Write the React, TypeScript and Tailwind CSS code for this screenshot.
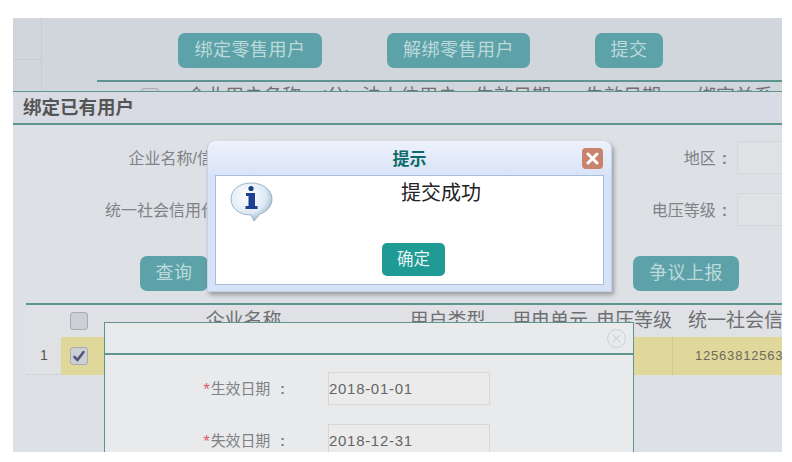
const font = { fontFamily: '"Liberation Sans", "Noto Sans CJK SC", sans-serif' }

function PageButton({ label, className }: { label: string; className: string }) {
  return (
    <button className={`h-[35px] shrink-0 rounded-[7px] bg-[#5da2a8] text-[18px] text-[#bcdadb] tracking-[0.5px] ${className}`}>
      {label}
    </button>
  )
}

function Checkbox({ checked }: { checked?: boolean }) {
  return (
    <span className="flex h-[18px] w-[18px] items-center justify-center rounded-[3px] border border-[#a9abb2] bg-[#cdcfd5]">
      {checked && (
        <svg width="14" height="14" viewBox="0 0 14 14">
          <path d="M2.5 8 L5.5 11 L11.5 3" fill="none" stroke="#55557a" strokeWidth="2.6" strokeLinecap="round" strokeLinejoin="round" />
        </svg>
      )}
    </span>
  )
}

function InfoIcon() {
  return (
    <svg width="44" height="42" viewBox="0 0 44 42">
      <defs>
        <radialGradient id="bubble" cx="0.4" cy="0.35" r="0.75">
          <stop offset="0" stopColor="#ffffff" />
          <stop offset="0.6" stopColor="#dfeaf5" />
          <stop offset="1" stopColor="#86a3bf" />
        </radialGradient>
      </defs>
      <path
        d="M21 1 C32 1 42 7 42 17 C42 25 36 30 30 32 L24 39 L21 33 C10 33 1 27 1 17 C1 7 10 1 21 1 Z"
        fill="url(#bubble)"
        stroke="#8ba4bd"
        strokeWidth="0.8"
      />
      <circle cx="21" cy="6.5" r="2.6" fill="#1a3f8a" />
      <path d="M16 11 H25 V24 H27.5 V27 H15.5 V24 H18.5 V14 H16 Z" fill="#1c3f94" />
    </svg>
  )
}

function Field({ label, value }: { label: string; value: string }) {
  return (
    <div className="flex h-[33px] items-center">
      <span className="flex w-[183px] items-center justify-end pt-[2px] text-[15px] text-[#808285]">
        <span className="mr-[1px] text-[17px] leading-none text-[#d9606e]">*</span>
        <span className="tracking-[-0.2px]">{label}</span>
        <span className="ml-[10px] mr-[3px] font-bold">:</span>
      </span>
      <span className="ml-[40px] flex h-[33px] w-[162px] items-center border border-[#d6d6d6] bg-[#ebebeb] pt-[2px] text-[15px] tracking-[0.7px] text-[#666]">
        {value}
      </span>
    </div>
  )
}

export default function App() {
  return (
    <div className="h-[462px] w-[792px] overflow-hidden bg-white pl-[13px] pt-[18px]" style={font}>
      <div className="relative h-[434px] w-[769px] overflow-hidden bg-[#d1d5dc]">
        {/* back page */}
        <div className="flex h-[73px]">
          <div className="w-[29px] shrink-0 border-r border-[#c7cbd2]">
            <div className="h-[42px] border-b border-[#c7cbd2]" />
          </div>
          <div className="flex-1">
            <div className="flex h-[62px] items-start pt-[15px]">
              <PageButton label="绑定零售用户" className="ml-[136px] w-[144px]" />
              <PageButton label="解绑零售用户" className="ml-[65px] w-[143px]" />
              <PageButton label="提交" className="ml-[65px] w-[68px]" />
            </div>
            <div className="ml-[55px] grid h-[32px] grid-cols-[90px_133px_42px_113px_110px_112px_1fr] items-center whitespace-nowrap border-t-2 border-[#5f9590] text-[19px] text-[#6d6f72]">
              <span className="pl-[44px]"><Checkbox /></span>
              <span>企业用户名称</span>
              <span>(分)</span>
              <span>法人位用户</span>
              <span>生效日期</span>
              <span>失效日期</span>
              <span>绑定关系</span>
            </div>
          </div>
        </div>

        {/* bind user window */}
        <div className="absolute inset-x-0 bottom-0 top-[73px] border-t border-[#5f9590] bg-[#dde0e5]">
          <div className="flex h-[33px] items-center border-b-2 border-[#5f9590] bg-[#d8dbe3] pl-[10px] text-[18.5px] font-bold text-[#555]">
            绑定已有用户
          </div>
          <div className="mt-[16px] flex h-[33px] items-center text-[16px] text-[#808285]">
            <span className="w-[236px] shrink-0 pr-[4px] pt-[3px] text-right">企业名称/信用：</span>
            <span className="w-[479px] shrink-0 pt-[3px] text-right">
              地区<span className="ml-[6px] mr-[1px] font-bold">:</span>
            </span>
            <span className="ml-[9px] h-[33px] w-[80px] shrink-0 border border-[#d4d6da] bg-[#dfe1e5]" />
          </div>
          <div className="mt-[19px] flex h-[33px] items-center text-[16px] text-[#808285]">
            <span className="w-[236px] shrink-0 pt-[3px] text-right">统一社会信用代码：</span>
            <span className="w-[479px] shrink-0 pt-[3px] text-right">
              电压等级<span className="ml-[6px] mr-[1px] font-bold">:</span>
            </span>
            <span className="ml-[9px] h-[33px] w-[80px] shrink-0 border border-[#d4d6da] bg-[#dfe1e5]" />
          </div>
          <div className="mt-[30px] flex">
            <PageButton label="查询" className="ml-[127px] w-[68px]" />
            <PageButton label="争议上报" className="ml-[425px] w-[106px]" />
          </div>
          <div className="ml-[13px] mt-[12px] border-t-2 border-[#5f9590]">
            <div className="grid h-[32px] grid-cols-[35px_36px_293px_115px_90px_78px_1fr] items-center overflow-hidden whitespace-nowrap bg-[#dfe1e5] text-[19px] text-[#6d6f72]">
              <span />
              <span className="pl-[9px]"><Checkbox /></span>
              <span className="text-center">企业名称</span>
              <span className="text-center">用户类型</span>
              <span className="text-center">用电单元</span>
              <span className="text-center">电压等级</span>
              <span className="pl-[15px]">统一社会信用代码</span>
            </div>
            <div className="grid h-[38px] grid-cols-[35px_36px_293px_115px_90px_78px_1fr] items-center bg-[#e0d79a] text-[13px] text-[#6b6b5a]">
              <span className="flex h-full items-center border-b border-dotted border-[#c4c6cb] bg-[#dfe1e5] pl-[14px] text-[14px] text-[#555]">1</span>
              <span className="pl-[9px]"><Checkbox checked /></span>
              <span />
              <span />
              <span />
              <span className="h-full border-r border-[#d3ca90]" />
              <span className="whitespace-nowrap pl-[22px] tracking-[0.8px]">12563812563</span>
            </div>
          </div>
        </div>

        {/* date window */}
        <div className="absolute left-[91px] top-[304px] h-[160px] w-[530px] border border-[#5f9590] bg-[#e9eaeb]">
          <div className="flex h-[32px] items-center justify-end border-b-2 border-[#5f9590] pr-[7px]">
            <span className="flex h-[19px] w-[19px] items-center justify-center rounded-full border border-[#cfcfd2]">
              <svg width="9" height="9" viewBox="0 0 9 9">
                <path d="M1 1 L8 8 M8 1 L1 8" stroke="#c4c4c8" strokeWidth="1" />
              </svg>
            </span>
          </div>
          <div className="mt-[17px] flex flex-col gap-[19px]">
            <Field label="生效日期" value="2018-01-01" />
            <Field label="失效日期" value="2018-12-31" />
          </div>
        </div>

        {/* message dialog */}
        <div className="absolute left-[194px] top-[123px] flex h-[151px] w-[405px] flex-col rounded-t-[7px] border border-[#c3d0e6] bg-[#d5e2f7] px-[7px] pb-[6px] shadow-[2px_3px_4px_rgba(90,90,90,0.5)]">
          <div className="relative -mx-[7px] -mt-px flex h-[34px] shrink-0 items-center justify-center rounded-t-[7px] bg-gradient-to-b from-[#edf2fb] to-[#d9e4f7] pt-[3px] text-[17px] font-bold text-[#0d6a6a]">
            提示
            <span className="absolute right-[8px] top-[7px] flex h-[21px] w-[21px] items-center justify-center rounded-[4px] bg-[#c9826b]">
              <svg width="13" height="13" viewBox="0 0 13 13">
                <path d="M2 2 L11 11 M11 2 L2 11" stroke="#fff" strokeWidth="3" strokeLinecap="round" />
              </svg>
            </span>
          </div>
          <div className="flex flex-1 flex-col border border-[#a9bddb] bg-white">
            <div className="flex h-[67px]">
              <div className="ml-[14px] mt-[6px]"><InfoIcon /></div>
              <span className="ml-[127px] mt-[5px] text-[20px] leading-[24px] text-[#222]">提交成功</span>
            </div>
            <button className="ml-[166px] h-[33px] w-[63px] rounded-[5px] bg-[#1f9a95] text-[16.5px] text-[#e8f4f3]">确定</button>
          </div>
        </div>
      </div>
    </div>
  )
}
